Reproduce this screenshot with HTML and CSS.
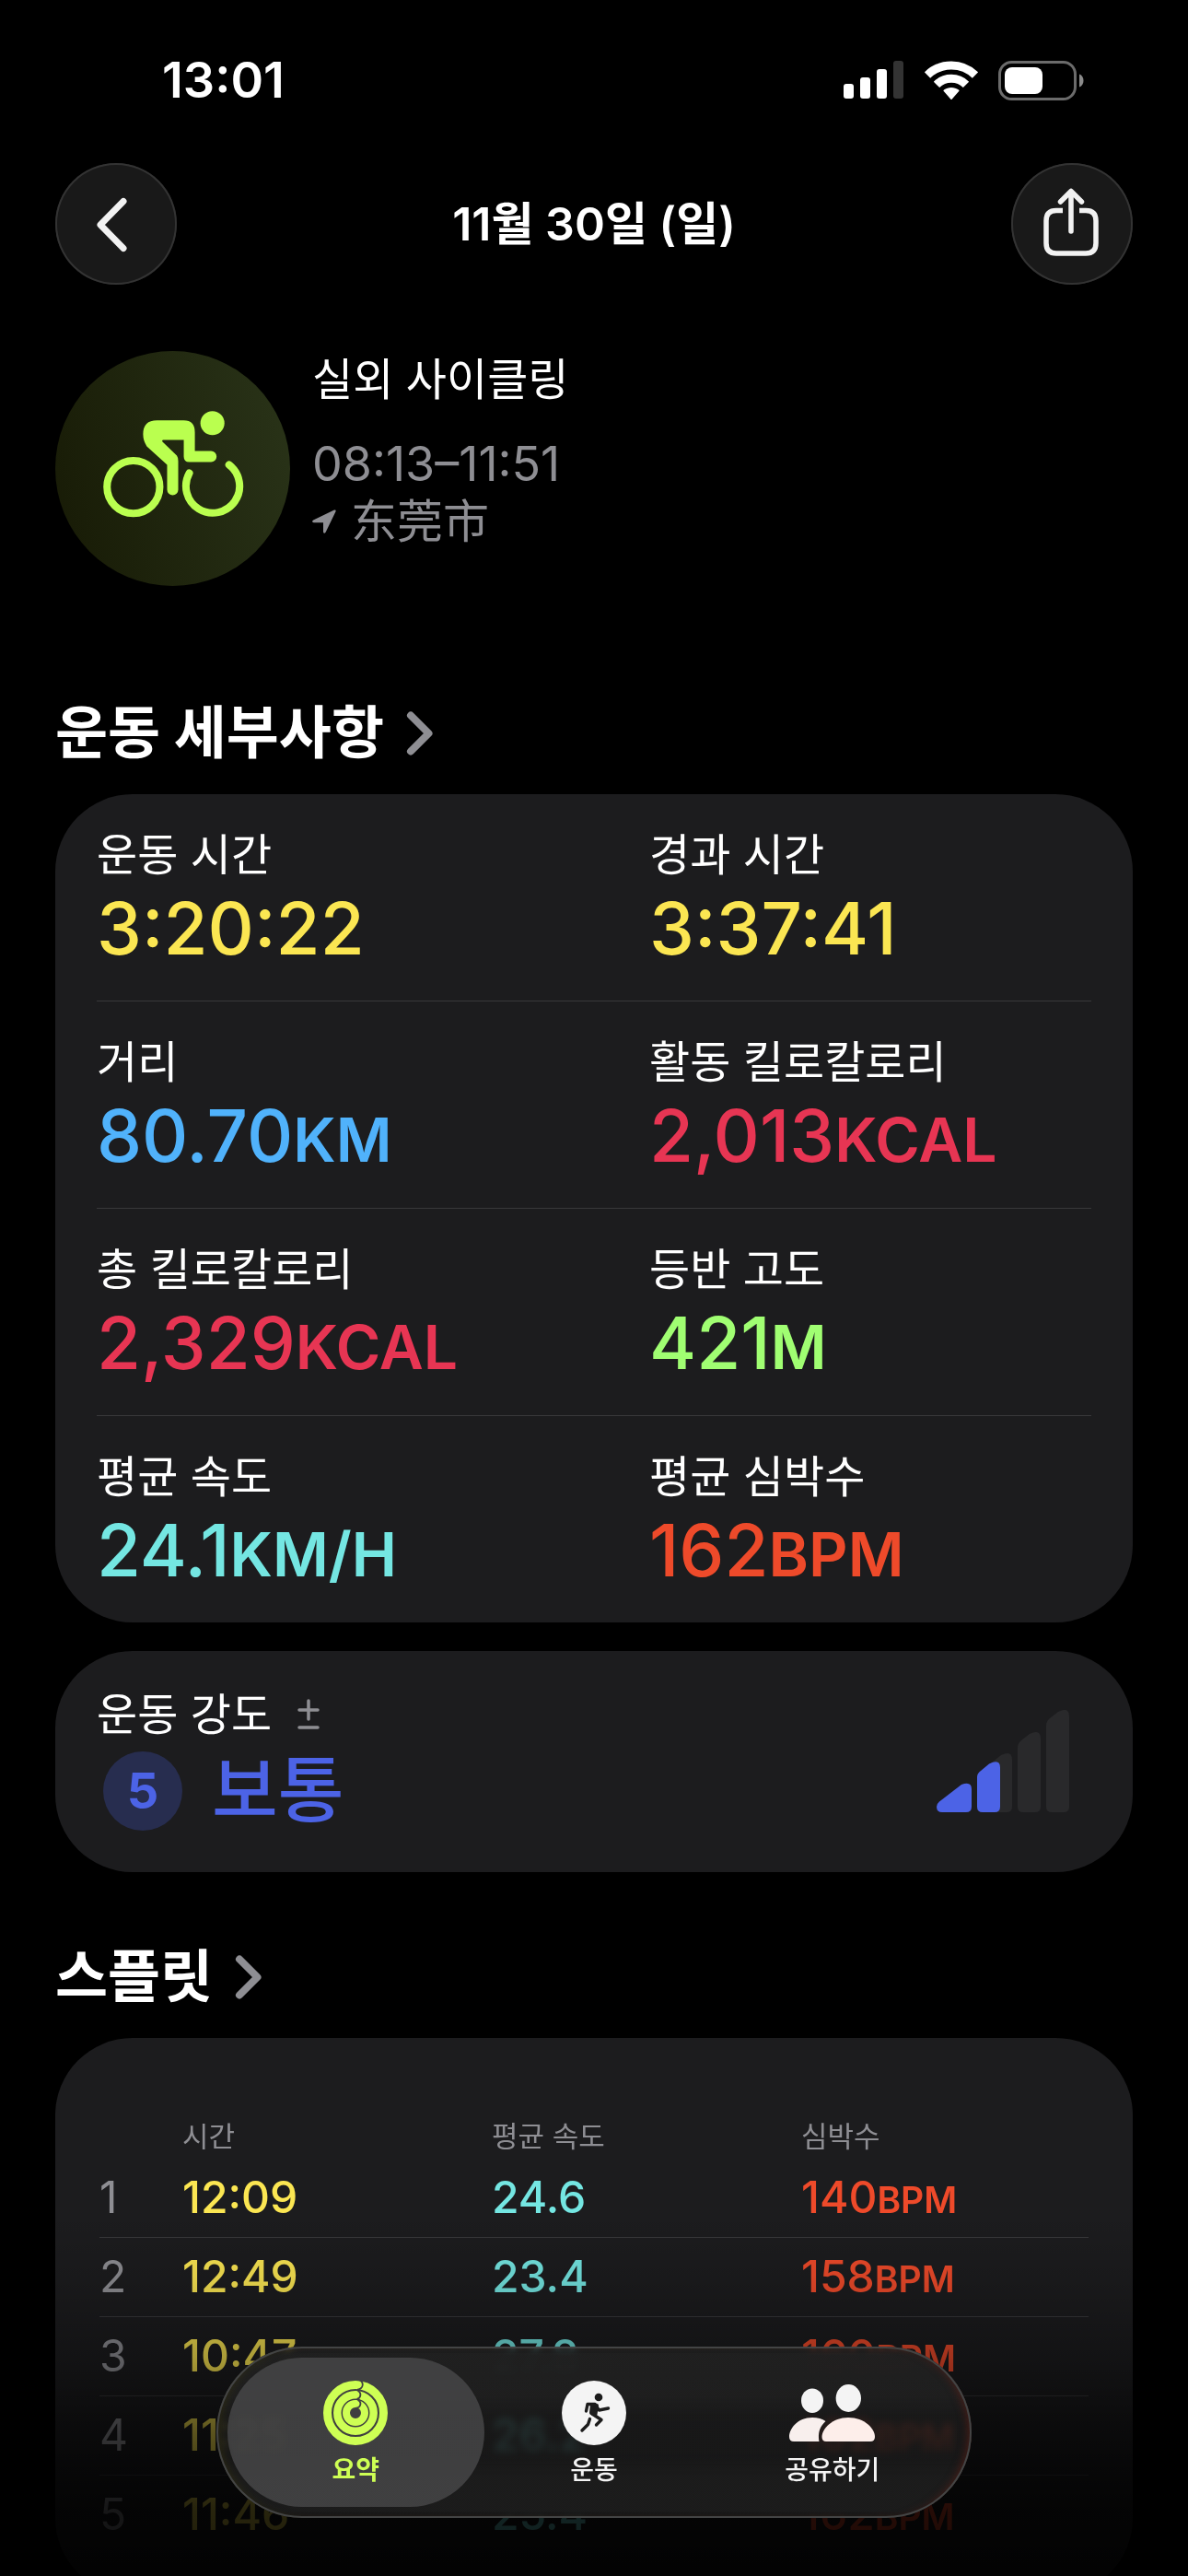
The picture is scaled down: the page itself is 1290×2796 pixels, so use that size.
FILE: index.html
```html
<!DOCTYPE html>
<html lang="ko">
<head>
<meta charset="utf-8">
<meta name="viewport" content="width=device-width, initial-scale=1">
<title>11월 30일 (일)</title>
<link rel="stylesheet" href="styles.css">
</head>
<body>
<div class="app">
  <div class="status-bar">
    <span class="status-time">13:01</span>
    <div class="status-icons">
      <svg width="66" height="42" viewBox="0 0 66 42" aria-hidden="true">
        <g fill="#fff"><rect x="0" y="25" width="11" height="16" rx="3"/><rect x="18" y="18" width="11" height="23" rx="3"/><rect x="36" y="9" width="11" height="32" rx="3"/></g>
        <rect x="54" y="0" width="11" height="41" rx="3" fill="#333"/>
      </svg>
      <svg width="58" height="42" viewBox="0 0 58 42" aria-hidden="true">
        <g fill="none" stroke="#fff" stroke-width="9"><path d="M3 15.5a37.3 37.3 0 0 1 52 0"/><path d="M13 25.9a22.8 22.8 0 0 1 32 0"/></g>
        <path d="M21 33.2a1 1 0 0 1 0-1.6c4.600-3.600 11.400-3.600 16 0a1 1 0 0 1 0 1.600l-7.200 8.200a1 1 0 0 1-1.600 0z" fill="#fff"/>
      </svg>
      <svg width="94" height="43" viewBox="0 0 94 43" aria-hidden="true">
        <rect x="1.500" y="1.500" width="82" height="40" rx="13" fill="none" stroke="#6b6b6b" stroke-width="3"/>
        <rect x="7" y="7" width="41" height="29" rx="8" fill="#fff"/>
        <path d="M88 14.500c6 2 6 12 0 14z" fill="#8a8a8a"/>
      </svg>
    </div>
  </div>

  <header class="nav-bar">
    <button class="round-button" type="button" aria-label="뒤로">
      <svg width="132" height="132" viewBox="0 0 132 132" aria-hidden="true"><path d="M74 41.500 49 67 74 92.500" fill="none" stroke="#f2f2f2" stroke-width="7" stroke-linecap="round" stroke-linejoin="round"/></svg>
    </button>
    <h1 class="nav-title">11월 30일 (일)</h1>
    <button class="round-button" type="button" aria-label="공유">
      <svg width="132" height="132" viewBox="0 0 132 132" aria-hidden="true"><g fill="none" stroke="#f2f2f2" stroke-width="5.500" stroke-linecap="round" stroke-linejoin="round"><path d="M56 51.500H49q-11 0-11 11V87q0 11 11 11H81q11 0 11-11V62.500q0-11-11-11H74" stroke-linecap="butt"/><path d="M65 74V32M53.500 42 65 30.500 76.500 42"/></g></svg>
    </button>
  </header>

  <main class="content">
    <section class="workout">
      <svg class="workout-icon" viewBox="0 0 254 254" aria-hidden="true">
        <g fill="none" stroke="#baff4f" stroke-width="8" stroke-linecap="round"><circle cx="84.500" cy="147" r="28.500"/><path d="M145 132A29 29 0 1 0 188 123"/></g>
        <g fill="#baff4f"><circle cx="170" cy="78" r="13"/><path d="M110 75H139Q151 75 151 88V108H168.500a6 6 0 0 1 0 12H145Q139 120 139 114V96H117q-2 0-1 2L131.500 113Q133 115 133 119V150a6 6 0 0 1-12 0V123L99 103Q95 97 95 90 95 75 110 75Z"/></g>
      </svg>
      <div class="workout-text">
        <h2 class="workout-name">실외 사이클링</h2>
        <p class="workout-time">08:13–11:51</p>
        <p class="workout-place" lang="zh">
          <svg width="26" height="26" viewBox="0 0 26 26" aria-hidden="true"><path d="M24 .6 1.200 11.400q-2.400 2 .4 2.800H12V24.500q1 2.400 2.600.2L25.600 2q.4-2-1.600-1.400z" fill="#8e8e93"/></svg>
          <span>东莞市</span>
        </p>
      </div>
    </section>

    <h2 class="section-title"><a href="#details">운동 세부사항
      <svg width="30" height="50" viewBox="0 0 30 50" aria-hidden="true"><path d="M5 5.500 24.500 25 5 44.500" fill="none" stroke="#8e8e93" stroke-width="8" stroke-linecap="round" stroke-linejoin="round"/></svg></a></h2>
    <dl class="card metrics" id="details">
      <div class="metric-row">
        <div class="metric"><dt>운동 시간</dt><dd class="yellow">3:20:22</dd></div>
        <div class="metric"><dt>경과 시간</dt><dd class="yellow">3:37:41</dd></div>
      </div>
      <div class="metric-row">
        <div class="metric"><dt>거리</dt><dd class="blue">80.70<span class="unit">KM</span></dd></div>
        <div class="metric"><dt>활동 킬로칼로리</dt><dd class="red">2,013<span class="unit">KCAL</span></dd></div>
      </div>
      <div class="metric-row">
        <div class="metric"><dt>총 킬로칼로리</dt><dd class="red">2,329<span class="unit">KCAL</span></dd></div>
        <div class="metric"><dt>등반 고도</dt><dd class="green">421<span class="unit">M</span></dd></div>
      </div>
      <div class="metric-row">
        <div class="metric"><dt>평균 속도</dt><dd class="teal">24.1<span class="unit">KM/H</span></dd></div>
        <div class="metric"><dt>평균 심박수</dt><dd class="orange">162<span class="unit">BPM</span></dd></div>
      </div>
    </dl>

    <section class="card effort">
      <div class="effort-text">
        <h3 class="effort-label">운동 강도
          <svg width="24" height="34" viewBox="0 0 24 34" aria-hidden="true"><path d="M2 12H22M12 2V22M2 31H22" fill="none" stroke="#8e8e93" stroke-width="3.500" stroke-linecap="round"/></svg></h3>
        <p class="effort-value"><span class="effort-score">5</span>보통</p>
      </div>
      <svg class="effort-bars" width="144" height="111" viewBox="0 0 144 111" aria-hidden="true">
        <g fill="#29292b">
          <path d="M44 70 70 49q12-6 12 5V105q0 6-6 6H50q-6 0-6-6z"/>
          <path d="M88 41Q88 36 92 33L101 26q12-6 12 5V105q0 6-6 6H94q-6 0-6-6z"/>
          <path d="M119 17Q119 12 123 9L132 2q12-6 12 5V105q0 6-6 6H125q-6 0-6-6z"/>
        </g>
        <g fill="#4c63e6">
          <path d="M3 99.500 27 81q11-4 11 5V105q0 6-6 6H6q-6 0-6-6 0-3 3-5.500z"/>
          <path d="M44 73q0-4 4-7L57 58.500q12-6 12 4V105q0 6-6 6H50q-6 0-6-6z"/>
        </g>
      </svg>
    </section>

    <h2 class="section-title"><a href="#splits">스플릿
      <svg width="30" height="50" viewBox="0 0 30 50" aria-hidden="true"><path d="M5 5.500 24.500 25 5 44.500" fill="none" stroke="#8e8e93" stroke-width="8" stroke-linecap="round" stroke-linejoin="round"/></svg></a></h2>
    <section class="card splits" id="splits">
      <table class="split-table">
        <thead>
          <tr><td></td><th scope="col">시간</th><th scope="col">평균 속도</th><th scope="col">심박수</th></tr>
        </thead>
        <tbody>
          <tr><th scope="row">1</th><td class="yellow">12:09</td><td class="teal">24.6</td><td class="orange">140<span class="unit">BPM</span></td></tr>
          <tr><th scope="row">2</th><td class="yellow">12:49</td><td class="teal">23.4</td><td class="orange">158<span class="unit">BPM</span></td></tr>
          <tr><th scope="row">3</th><td class="yellow">10:47</td><td class="teal">27.8</td><td class="orange">160<span class="unit">BPM</span></td></tr>
          <tr><th scope="row">4</th><td class="yellow">11:25</td><td class="teal">26.2</td><td class="orange">162<span class="unit">BPM</span></td></tr>
          <tr><th scope="row">5</th><td class="yellow">11:46</td><td class="teal">25.4</td><td class="orange">162<span class="unit">BPM</span></td></tr>
        </tbody>
      </table>
    </section>
  </main>

  <div class="bottom-fade"></div>
  <nav class="tab-bar">
    <a class="tab tab-current" href="#summary" aria-current="page">
      <svg width="70" height="70" viewBox="0 0 70 70" aria-hidden="true">
        <g fill="none" stroke="#ceff54"><circle cx="35" cy="35" r="30.500" stroke-width="9"/><circle cx="35" cy="35" r="19.700" stroke-width="8.500"/><circle cx="35" cy="35" r="10" stroke-width="8"/></g>
        <path d="M38 -1a5 5 0 0 1-1 10.500M37.500 11a4.600 4.600 0 0 1-1 8.800M37.500 21a4.400 4.400 0 0 1-2 8.500M38 9l1.500 2M38 19.500l1 2" fill="none" stroke="#414142" stroke-width="1.800"/>
      </svg>
      <span>요약</span>
    </a>
    <a class="tab" href="#workout">
      <svg width="70" height="70" viewBox="0 0 70 70" aria-hidden="true">
        <circle cx="35" cy="35" r="35" fill="#f4f4f4"/>
        <circle cx="40" cy="18" r="4.300" fill="#1c1c1c"/>
        <g fill="none" stroke="#1c1c1c" stroke-width="3.400" stroke-linecap="round" stroke-linejoin="round"><path d="M26.500 33 28 25.500H36L40.500 32 50.500 30"/><path d="M33 36 43 42.500 37.500 48"/><path d="M30.500 41.500 28.500 47.500 22 54"/></g>
        <path d="M33 26 38 27 36.500 36.500 32 35z" fill="#1c1c1c" stroke="#1c1c1c" stroke-width="4" stroke-linejoin="round"/>
      </svg>
      <span>운동</span>
    </a>
    <a class="tab" href="#sharing">
      <svg width="94" height="70" viewBox="0 -4 94 70" aria-hidden="true">
        <g fill="#f4f4f4"><ellipse cx="64.300" cy="15" rx="13.700" ry="15"/><ellipse cx="25" cy="17.700" rx="12" ry="13.200"/></g>
        <path d="M64 36C82 36 93 48 93 57q0 5-5 5H40q-4.500 0-4.500-5C35.500 48 47 36 64 36z" fill="#fdeeea"/>
        <path d="M25 36C31 36 36 37.500 39.500 40 34 45 31.500 51 32 58q0 2 .5 4H5q-5 0-5-5C0 48 9 36 25 36z" fill="#f8efed"/>
      </svg>
      <span>공유하기</span>
    </a>
  </nav>
</div>
</body>
</html>
```
FILE: styles.css
```css
* {
  box-sizing: border-box;
}

body {
  margin: 0;
  background: #000;
  color: #fff;
  font-family: Inter, "Noto Sans CJK KR", sans-serif;
}

h1, h2, h3, p, dl, dd {
  margin: 0;
  font-weight: 400;
}

a {
  color: inherit;
  text-decoration: none;
}

svg {
  display: block;
  flex: none;
}

.app {
  position: relative;
  display: flex;
  flex-direction: column;
  height: 100vh;
  overflow: hidden;
}

/* Status bar */
.status-bar {
  flex: none;
  display: flex;
  align-items: center;
  justify-content: space-between;
  padding: 57px 112px 60px 176px;
}

.status-time {
  font-size: 54px;
  line-height: 60px;
  font-weight: 600;
}

.status-icons {
  display: flex;
  align-items: center;
  gap: 22px;
}

/* Navigation bar */
.nav-bar {
  flex: none;
  display: flex;
  align-items: center;
  justify-content: space-between;
  padding: 0 60px;
}

.nav-title {
  font-size: 50px;
  line-height: 60px;
  font-weight: 600;
}

.round-button {
  width: 132px;
  height: 132px;
  padding: 0;
  display: grid;
  place-content: center;
  border: 0;
  border-radius: 50%;
  background: #191919;
  box-shadow: inset 0 0 0 2px #333;
}

.content {
  flex: 1;
  min-height: 0;
  overflow-y: auto;
  scrollbar-width: none;
  padding: 72px 60px 0;
}

/* Workout summary */
.workout {
  display: flex;
  gap: 24px;
  margin-bottom: 119px;
}

.workout-icon {
  width: 255px;
  height: 255px;
  border-radius: 50%;
  background: linear-gradient(75deg, #171a05, #2a3419);
}

.workout-name {
  font-size: 48px;
  line-height: 62px;
  margin-bottom: 30px;
}

.workout-time {
  color: #8e8e93;
  font-size: 52px;
  line-height: 62px;
}

.workout-place {
  display: flex;
  align-items: center;
  gap: 16px;
  color: #8e8e93;
  font-family: Inter, "Noto Sans CJK SC", sans-serif;
  font-size: 50px;
  line-height: 62px;
}

/* Section headings */
.section-title {
  font-size: 62px;
  line-height: 82px;
  font-weight: 700;
  margin-bottom: 25px;
}

.section-title a {
  display: inline-flex;
  align-items: center;
  gap: 24px;
}

/* Cards */
.card {
  border-radius: 84px;
  background: #1c1c1e;
  padding: 0 45px;
}

.yellow { color: #fbe652; }
.blue { color: #50b2fb; }
.red { color: #e73553; }
.green { color: #a0fe72; }
.teal { color: #74e6e2; }
.orange { color: #ee4a2a; }

.metrics {
  margin-bottom: 31px;
}

.metric-row {
  display: grid;
  grid-template-columns: 1fr 1fr;
  column-gap: 120px;
  padding: 36px 0;
}

.metric-row + .metric-row {
  border-top: 1px solid #38383a;
}

.metric dt {
  font-size: 48px;
  line-height: 60px;
  margin-bottom: 8px;
  white-space: nowrap;
}

.metric dd {
  font-size: 78px;
  line-height: 84px;
  font-weight: 500;
  white-space: nowrap;
}

.unit {
  line-height: 1;
}

.metric .unit {
  font-size: 66px;
  font-weight: 600;
}

/* Effort */
.effort {
  display: flex;
  align-items: flex-start;
  justify-content: space-between;
  padding: 39px 69px 45px 45px;
  margin-bottom: 73px;
}

.effort-label {
  display: flex;
  align-items: center;
  gap: 28px;
  font-size: 48px;
  line-height: 60px;
  margin-bottom: 10px;
}

.effort-value {
  display: flex;
  align-items: center;
  gap: 32px;
  padding-left: 7px;
  color: #4c63e6;
  font-size: 78px;
  line-height: 86px;
  font-weight: 500;
}

.effort-score {
  width: 86px;
  height: 86px;
  border-radius: 50%;
  background: #272d4f;
  font-size: 54px;
  font-weight: 700;
  text-align: center;
}

.effort-bars {
  margin-top: 25px;
}

/* Splits */
.splits {
  padding: 84px 48px 45px;
}

.split-table {
  width: 100%;
  table-layout: fixed;
  border-collapse: collapse;
  text-align: left;
}

.split-table th,
.split-table td {
  padding: 0;
  white-space: nowrap;
}

.split-table thead td {
  width: 90px;
}

.split-table thead th {
  height: 46px;
  color: #8e8e93;
  font-size: 31px;
  line-height: 30px;
  font-weight: 400;
}

.split-table thead th:nth-child(2),
.split-table thead th:nth-child(3) {
  width: 336px;
}

.split-table tbody th,
.split-table tbody td {
  height: 86px;
  font-size: 48px;
  line-height: 60px;
  font-weight: 500;
}

.split-table tbody th {
  color: #8e8e93;
  font-weight: 400;
}

.split-table tbody tr + tr {
  border-top: 1px solid #38383a;
}

.split-table .unit {
  font-size: 39px;
  font-weight: 600;
}

/* Tab bar */
.bottom-fade {
  position: absolute;
  inset: auto 0 0;
  height: 396px;
  pointer-events: none;
  background: linear-gradient(rgba(0, 0, 0, 0), rgba(0, 0, 0, 0.1) 18%, rgba(0, 0, 0, 0.32) 40%, rgba(0, 0, 0, 0.64) 61%, rgba(0, 0, 0, 0.84) 81%, rgba(0, 0, 0, 0.9));
}

.tab-bar {
  position: absolute;
  bottom: 63px;
  left: 50%;
  width: 820px;
  max-width: 100%;
  transform: translateX(-50%);
  display: flex;
  padding: 12px;
  border-radius: 93px;
  background: linear-gradient(rgba(32, 32, 32, 0.8), rgba(32, 32, 32, 0.99) 5%, rgba(31, 31, 31, 0.98) 28%, rgba(28, 28, 28, 0.74) 40%, rgba(28, 28, 28, 0.74) 64%, rgba(28, 28, 28, 0.98) 76%, rgba(28, 28, 28, 0.98) 96%, rgba(28, 28, 28, 0.8));
  box-shadow: inset 0 0 0 2px #434444, inset -8px 0 10px -4px rgba(100, 34, 24, 0.6), inset 8px 0 10px -4px rgba(60, 56, 16, 0.5);
  backdrop-filter: blur(4px) brightness(1.4);
}

.tab {
  flex: 1;
  display: flex;
  flex-direction: column;
  align-items: center;
  gap: 10px;
  padding: 25px 0 23px;
  border-radius: 81px;
  color: #f4f4f4;
  font-size: 28px;
  line-height: 34px;
  font-weight: 500;
}

.tab + .tab {
  margin-left: -20px;
}

.tab-current {
  background: rgba(70, 70, 71, 0.86);
  color: #ceff54;
  font-weight: 700;
}
```
